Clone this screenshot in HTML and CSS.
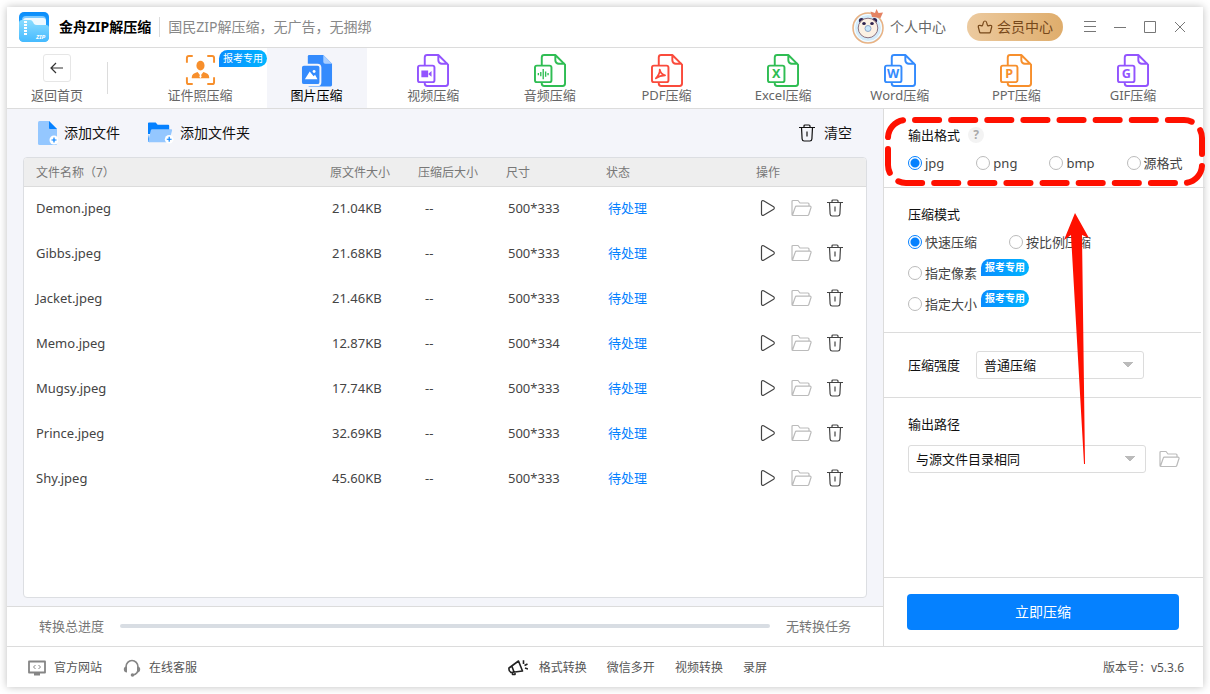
FILE: index.html
```html
<!DOCTYPE html>
<html lang="zh-CN">
  <head>
    <meta charset="UTF-8" />
    <meta name="viewport" content="width=device-width, initial-scale=1.0" />
    <title>金舟ZIP解压缩</title>
    <link rel="stylesheet" href="styles.css">
  </head>
  <body>
    <!-- shared icons -->
    <svg class="sprite" aria-hidden="true">
      <symbol id="doc" viewBox="0 0 33 34">
        <path d="M8 12V3.500a2.500 2.500 0 0 1 2.500-2.500H22l10 10v19.500a2.500 2.500 0 0 1-2.500 2.500h-19a2.500 2.500 0 0 1-2.500-2.500V29M22 1v5.500a3.500 3.500 0 0 0 3.500 3.500H32" fill="none" stroke="currentColor" stroke-width="2" stroke-linejoin="round" />
        <rect x="1" y="12" width="17" height="17" rx="2" fill="#fff" stroke="currentColor" stroke-width="2" />
      </symbol>
      <symbol id="play" viewBox="0 0 16 18">
        <path d="M1.500 3v12c0 1.300 1 1.800 2.100 1.200l10-6c.9-.6.900-1.800 0-2.400l-10-6C2.500 1.200 1.500 1.700 1.500 3z" fill="none" stroke="currentColor" stroke-width="1.200" />
      </symbol>
      <symbol id="folder" viewBox="0 0 21 18">
        <path d="M1 15.500V2.500Q1 1.500 2 1.500h5l2 2.500h8q1 0 1 1v2M1 15.500Q1 16.500 2 16.500h14.500q1 0 1.300-1l2.200-7q.3-1.300-1-1.300H5.500q-1 0-1.300 1L1.500 16" fill="none" stroke="currentColor" stroke-width="1.200" />
      </symbol>
      <symbol id="trash" viewBox="0 0 16 18">
        <path d="M0 3.500h16M5 3.500V2q0-1 1-1h4q1 0 1 1v1.500M2.500 3.500l.6 11.500q.2 2 2 2h5.800q1.800 0 2-2l.6-11.500M8 7.500v5" fill="none" stroke="currentColor" stroke-width="1.200" />
      </symbol>
    </svg>

    <div class="window">
      <header class="titlebar">
        <svg class="logo" viewBox="0 0 30 30">
          <defs>
            <linearGradient id="logoBack" x1="0" y1="0" x2="0" y2="1">
              <stop offset="0" stop-color="#0a8dfb" /><stop offset="1" stop-color="#3bb4ff" />
            </linearGradient>
            <linearGradient id="logoFront" x1="0" y1="0" x2="0" y2="1">
              <stop offset="0" stop-color="#8adcff" /><stop offset="1" stop-color="#45baff" />
            </linearGradient>
          </defs>
          <rect width="30" height="30" rx="5" fill="url(#logoBack)" />
          <path d="M3 8q0-4 4-4h16q4 0 4 4v10H3z" fill="#7cc9ff" />
          <path d="M4 9q0-3 3-3h17q3 0 3 3v9H4z" fill="#eef9ff" />
          <path d="M0 11q0-3 3-3h8q2 0 3 2l1 2q1 1 3 1h9q3 0 3 3v9q0 5-5 5H5q-5 0-5-5z" fill="url(#logoFront)" />
          <path d="M6.500 9v14" stroke="#fff" stroke-width="3" stroke-dasharray="2 1" />
          <text x="17" y="27" class="logo-text">ZIP</text>
        </svg>
        <h1>金舟ZIP解压缩</h1>
        <p class="slogan">国民ZIP解压缩，无广告，无捆绑</p>

        <a href="#" class="user">
          <svg class="avatar" viewBox="0 0 34 36">
            <circle cx="16" cy="19" r="15" fill="#d3ecfb" stroke="#e9b283" stroke-width="1.500" />
            <circle cx="16" cy="19" r="13.500" fill="none" stroke="#fff" stroke-width="1" />
            <circle cx="9.500" cy="11.500" r="2.600" fill="#2e2450" />
            <circle cx="22.500" cy="11.500" r="2.600" fill="#2e2450" />
            <circle cx="16" cy="19" r="9.800" fill="#fbf1e4" stroke="#8b7280" stroke-width="1" />
            <ellipse cx="12" cy="14.500" rx="1.800" ry="1.500" fill="#2e2450" />
            <ellipse cx="20" cy="14.500" rx="1.800" ry="1.500" fill="#2e2450" />
            <circle cx="16" cy="19.500" r="3" fill="#c9e8fc" stroke="#8da6c8" stroke-width="1" />
            <path d="M18.500 2.500l4.500 1.500L24.500 0l2 4 4.500-.5-2.500 5.500-8.500-1z" fill="#e48363" />
          </svg>
          个人中心
        </a>
        <a href="#" class="vip">
          <svg viewBox="0 0 16 14"><path d="M3.500 12.800h9q.7 0 .9-.8l1.300-5q.3-1.800-1.400-1.700-1.600.2-2.300.7Q10 5 9.800 3 9.500 1 8 1T6.200 3Q6 5 5 6q-.7-.5-2.300-.7Q1 5.200 1.300 7l1.300 5q.2.800.9.800z" fill="none" stroke="currentColor" stroke-width="1.200" stroke-linejoin="round" /></svg>
          会员中心
        </a>
        <div class="window-buttons">
          <button type="button" aria-label="菜单"><svg viewBox="0 0 14 14"><path d="M1 1.500h12M1 6.500h12M1 11.500h12" /></svg></button>
          <button type="button" aria-label="最小化"><svg viewBox="0 0 14 14"><path d="M1 7.500h12" /></svg></button>
          <button type="button" aria-label="最大化"><svg viewBox="0 0 14 14"><path d="M1.500 1.500h11v11h-11z" /></svg></button>
          <button type="button" aria-label="关闭"><svg viewBox="0 0 14 14"><path d="M2 2l10 10M12 2L2 12" /></svg></button>
        </div>
      </header>

      <nav class="tabs">
        <a href="#" class="back">
          <span class="back-icon"><svg viewBox="0 0 14 12"><path d="M13 6H1M6 1L1 6l5 5" fill="none" stroke="currentColor" stroke-width="1.200" /></svg></span>
          返回首页
        </a>
        <div class="tab-list">
          <a href="#" class="tab">
            <svg class="orange" viewBox="0 0 33 34">
              <path d="M3 9V4q0-2 2-2h4M24 2h5q2 0 2 2v5M31 24v5q0 2-2 2h-5M9 31H5q-2 0-2-2v-5" fill="none" stroke="currentColor" stroke-width="2" />
              <ellipse cx="17" cy="12" rx="4.200" ry="5" fill="currentColor" />
              <path d="M8 25v-1q0-4 6-5.500l3 4 3-4q6 1.500 6 5.500v1z" fill="currentColor" />
              <path d="M17 19.500l1.200 4-1.200 1.500-1.200-1.500z" fill="#fff" />
            </svg>
            证件照压缩
            <span class="badge">报考专用</span>
          </a>
          <a href="#" class="tab active">
            <svg viewBox="0 0 33 34">
              <path d="M7 2.500Q7 1 8.500 1H23l9 9v22q0 1.500-1.500 1.500h-22Q7 33.500 7 32z" fill="#348bfd" />
              <path d="M23 1l9 9h-7q-2 0-2-2z" fill="#a9cfff" />
              <rect x="0" y="11" width="20" height="21" rx="3" fill="#348bfd" stroke="#f4f5fa" stroke-width="2" />
              <path d="M4 26l5-8 4 5 1.500-1.500L17 26z" fill="#fff" />
              <circle cx="13.500" cy="18" r="1.500" fill="#fff" />
            </svg>
            图片压缩
          </a>
          <a href="#" class="tab">
            <svg class="purple" viewBox="0 0 33 34"><use href="#doc" /><path d="M4.500 17h7v7h-7zM12 20l3-2.500v6L12 21z" fill="currentColor" /></svg>
            视频压缩
          </a>
          <a href="#" class="tab">
            <svg class="green" viewBox="0 0 33 34"><use href="#doc" /><path d="M4.500 19.500v2.500M7 18.500v4.500M9.500 15.500v10.500M12 18v5.500M14.500 19.500v2.500" stroke="currentColor" stroke-width="1.400" /></svg>
            音频压缩
          </a>
          <a href="#" class="tab">
            <svg class="red" viewBox="0 0 33 34"><use href="#doc" /><path d="M9 16q.5 4-4 9 4-3 9.500-3Q10 21 9 16z" fill="none" stroke="currentColor" stroke-width="1.800" stroke-linejoin="round" /></svg>
            PDF压缩
          </a>
          <a href="#" class="tab">
            <svg class="green" viewBox="0 0 33 34"><use href="#doc" /><text x="9.500" y="25" class="glyph">X</text></svg>
            Excel压缩
          </a>
          <a href="#" class="tab">
            <svg class="blue" viewBox="0 0 33 34"><use href="#doc" /><text x="9.500" y="25" class="glyph">W</text></svg>
            Word压缩
          </a>
          <a href="#" class="tab">
            <svg class="orange" viewBox="0 0 33 34"><use href="#doc" /><text x="9.500" y="25" class="glyph">P</text></svg>
            PPT压缩
          </a>
          <a href="#" class="tab">
            <svg class="purple" viewBox="0 0 33 34"><use href="#doc" /><text x="9.500" y="25" class="glyph">G</text></svg>
            GIF压缩
          </a>
        </div>
      </nav>

      <div class="content">
        <main class="files">
          <div class="toolbar">
            <button type="button">
              <svg class="add-file" viewBox="0 0 20 24">
                <path d="M0 1.500Q0 0 1.500 0H11l8 8v14.500q0 1.500-1.500 1.500h-16Q0 24 0 22.500z" fill="#94c7ff" />
                <path d="M11 0l8 8h-7q-1 0-1-1z" fill="#0581ff" />
                <circle cx="16" cy="19" r="4.500" fill="#fff" />
                <path d="M13.500 19h5M16 16.500v5" stroke="#0581ff" stroke-width="1.200" />
              </svg>
              添加文件
            </button>
            <button type="button">
              <svg class="add-folder" viewBox="0 0 27 22">
                <path d="M0 1q0-1 1-1h7l2 2.500h11q1 0 1 1V12H0z" fill="#0581ff" />
                <path d="M0 12v7q0 1.500 1.500 1.500z" fill="#0581ff" />
                <path d="M3 8q.3-1 1.300-1H24q1.300 0 1 1.300l-3 11q-.3 1.200-1.500 1.200h-19Q0 20.500.3 19z" fill="#94c7ff" />
                <circle cx="22" cy="17.500" r="4.500" fill="#fff" />
                <path d="M19.500 17.500h5M22 15v5" stroke="#0581ff" stroke-width="1.200" />
              </svg>
              添加文件夹
            </button>
            <button type="button" class="clear"><svg class="trash"><use href="#trash" /></svg>清空</button>
          </div>

          <div class="table-box">
            <table>
              <colgroup>
                <col /><col class="col-size" /><col class="col-size" /><col class="col-dim" /><col class="col-status" /><col class="col-actions" />
              </colgroup>
              <thead>
                <tr><th>文件名称（7）</th><th>原文件大小</th><th>压缩后大小</th><th>尺寸</th><th>状态</th><th>操作</th></tr>
              </thead>
              <tbody>
                <tr>
                  <td>Demon.jpeg</td><td>21.04KB</td><td class="empty">--</td><td>500*333</td><td class="pending">待处理</td>
                  <td><div class="actions">
                    <button type="button" aria-label="开始"><svg class="play"><use href="#play" /></svg></button>
                    <button type="button" aria-label="打开文件夹" disabled><svg class="folder"><use href="#folder" /></svg></button>
                    <button type="button" aria-label="删除"><svg class="trash"><use href="#trash" /></svg></button>
                  </div></td>
                </tr>
                <tr>
                  <td>Gibbs.jpeg</td><td>21.68KB</td><td class="empty">--</td><td>500*333</td><td class="pending">待处理</td>
                  <td><div class="actions">
                    <button type="button" aria-label="开始"><svg class="play"><use href="#play" /></svg></button>
                    <button type="button" aria-label="打开文件夹" disabled><svg class="folder"><use href="#folder" /></svg></button>
                    <button type="button" aria-label="删除"><svg class="trash"><use href="#trash" /></svg></button>
                  </div></td>
                </tr>
                <tr>
                  <td>Jacket.jpeg</td><td>21.46KB</td><td class="empty">--</td><td>500*333</td><td class="pending">待处理</td>
                  <td><div class="actions">
                    <button type="button" aria-label="开始"><svg class="play"><use href="#play" /></svg></button>
                    <button type="button" aria-label="打开文件夹" disabled><svg class="folder"><use href="#folder" /></svg></button>
                    <button type="button" aria-label="删除"><svg class="trash"><use href="#trash" /></svg></button>
                  </div></td>
                </tr>
                <tr>
                  <td>Memo.jpeg</td><td>12.87KB</td><td class="empty">--</td><td>500*334</td><td class="pending">待处理</td>
                  <td><div class="actions">
                    <button type="button" aria-label="开始"><svg class="play"><use href="#play" /></svg></button>
                    <button type="button" aria-label="打开文件夹" disabled><svg class="folder"><use href="#folder" /></svg></button>
                    <button type="button" aria-label="删除"><svg class="trash"><use href="#trash" /></svg></button>
                  </div></td>
                </tr>
                <tr>
                  <td>Mugsy.jpeg</td><td>17.74KB</td><td class="empty">--</td><td>500*333</td><td class="pending">待处理</td>
                  <td><div class="actions">
                    <button type="button" aria-label="开始"><svg class="play"><use href="#play" /></svg></button>
                    <button type="button" aria-label="打开文件夹" disabled><svg class="folder"><use href="#folder" /></svg></button>
                    <button type="button" aria-label="删除"><svg class="trash"><use href="#trash" /></svg></button>
                  </div></td>
                </tr>
                <tr>
                  <td>Prince.jpeg</td><td>32.69KB</td><td class="empty">--</td><td>500*333</td><td class="pending">待处理</td>
                  <td><div class="actions">
                    <button type="button" aria-label="开始"><svg class="play"><use href="#play" /></svg></button>
                    <button type="button" aria-label="打开文件夹" disabled><svg class="folder"><use href="#folder" /></svg></button>
                    <button type="button" aria-label="删除"><svg class="trash"><use href="#trash" /></svg></button>
                  </div></td>
                </tr>
                <tr>
                  <td>Shy.jpeg</td><td>45.60KB</td><td class="empty">--</td><td>500*333</td><td class="pending">待处理</td>
                  <td><div class="actions">
                    <button type="button" aria-label="开始"><svg class="play"><use href="#play" /></svg></button>
                    <button type="button" aria-label="打开文件夹" disabled><svg class="folder"><use href="#folder" /></svg></button>
                    <button type="button" aria-label="删除"><svg class="trash"><use href="#trash" /></svg></button>
                  </div></td>
                </tr>
              </tbody>
            </table>
          </div>

          <div class="progress-row">
            <label for="total">转换总进度</label>
            <progress id="total" value="0" max="100"></progress>
            <span>无转换任务</span>
          </div>
        </main>

        <aside class="settings">
          <fieldset>
            <legend>输出格式 <button type="button" class="help" aria-label="帮助">?</button></legend>
            <div class="options">
              <label for="jpg"><input type="radio" id="jpg" name="format" checked />jpg</label>
              <label for="png"><input type="radio" id="png" name="format" />png</label>
              <label for="bmp"><input type="radio" id="bmp" name="format" />bmp</label>
              <label for="source"><input type="radio" id="source" name="format" />源格式</label>
            </div>
          </fieldset>

          <fieldset class="mode">
            <legend>压缩模式</legend>
            <div class="options">
              <label for="fast"><input type="radio" id="fast" name="mode" checked />快速压缩</label>
              <label for="ratio"><input type="radio" id="ratio" name="mode" />按比例压缩</label>
            </div>
            <div class="options">
              <label for="pixels"><input type="radio" id="pixels" name="mode" />指定像素<span class="badge">报考专用</span></label>
            </div>
            <div class="options">
              <label for="size"><input type="radio" id="size" name="mode" />指定大小<span class="badge">报考专用</span></label>
            </div>
          </fieldset>

          <div class="strength">
            <label for="level">压缩强度</label>
            <select id="level"><option>普通压缩</option></select>
          </div>

          <div class="output">
            <label for="path">输出路径</label>
            <div class="path-row">
              <select id="path"><option>与源文件目录相同</option></select>
              <button type="button" aria-label="浏览"><svg class="folder"><use href="#folder" /></svg></button>
            </div>
          </div>

          <div class="submit">
            <button type="button" class="start">立即压缩</button>
          </div>

          <!-- highlight box and arrow drawn over the settings -->
          <svg class="callout" viewBox="0 0 324 360" aria-hidden="true">
            <path class="callout-box" pathLength="720" d="M22 11H300a18 18 0 0 1 18 18V56a18 18 0 0 1-18 18H22a18 18 0 0 1-18-18V29a18 18 0 0 1 18-18z" />
            <path d="M191 104l14 25-7-3 3 229h-1L187 126l-7 5z" fill="#ff1000" />
          </svg>
        </aside>
      </div>

      <footer>
        <div class="support">
          <a href="#">
            <svg viewBox="0 0 18 16"><path d="M1 1.500h16v11H1z" fill="none" stroke="#858585" stroke-width="1.800" stroke-linejoin="round" /><path d="M6 13h6v2.500H6z" fill="#858585" /><path d="M7.500 5L5.500 7l2 2M10.500 5l2 2-2 2" fill="none" stroke="#858585" stroke-width="1" /></svg>
            官方网站
          </a>
          <a href="#">
            <svg viewBox="0 0 18 18"><path d="M3 10V8a6 6.500 0 0 1 12 0v2M15 10q0 5-5 6" fill="none" stroke="#858585" stroke-width="1.600" /><path d="M4 7.500v6Q1 13.500.8 10.500T4 7.500zM14 7.500v6q3 0 3.200-3T14 7.500z" fill="#858585" /><circle cx="9.500" cy="16" r="1.800" fill="#858585" /></svg>
            在线客服
          </a>
        </div>
        <div class="links">
          <svg viewBox="0 0 20 16"><path d="M1 8.500L10.500 1.500 14.500 11.500 3 13Q.5 11.500 1 8.500zM4 7l2 5.500M4.500 13v2h2.500v-2.500M15.500 4.500V.8M16.500 6l3-1.500M17 8.500l3 1" fill="none" stroke="#222" stroke-width="1.600" stroke-linejoin="round" /></svg>
          <a href="#">格式转换</a>
          <a href="#">微信多开</a>
          <a href="#">视频转换</a>
          <a href="#">录屏</a>
          <span class="version">版本号：v5.3.6</span>
        </div>
      </footer>
    </div>
  </body>
</html>
```
FILE: styles.css
```css
* {
  box-sizing: border-box;
}

body {
  font-family: "Noto Sans", "Noto Sans CJK SC", sans-serif;
  font-size: 13px;
  line-height: 20px;
  color: #444;
  background-color: #fff;
  margin: 0;
  padding: 7px;
}

a {
  color: inherit;
  text-decoration: none;
}

button,
select {
  font: inherit;
  color: inherit;
  padding: 0;
  border: none;
  background: none;
}

button {
  display: flex;
  align-items: center;
  cursor: pointer;
}

svg {
  display: block;
  flex: none;
}

.sprite {
  position: absolute;
  width: 0;
  height: 0;
}

.window {
  display: flex;
  flex-direction: column;
  min-height: calc(100vh - 14px);
  background-color: #fff;
  box-shadow: 0 0 8px rgba(0, 0, 0, 0.25);
}

/* title bar */
.titlebar {
  display: flex;
  align-items: center;
  height: 41px;
  padding: 0 16px 0 12px;
  border-bottom: 1px solid #dcdcdc;
  font-size: 14px;
}

.logo {
  width: 30px;
  height: 30px;
}

.logo-text {
  font-size: 6px;
  font-weight: bold;
  font-style: italic;
  fill: #fff;
}

h1 {
  margin: 0 8px 0 10px;
  font-size: 14px;
  font-weight: bold;
  color: #000;
}

.slogan {
  margin: 0;
  padding-left: 8px;
  border-left: 1px solid #dcdcdc;
  color: #888;
}

.user {
  display: flex;
  align-items: center;
  gap: 4px;
  margin-left: auto;
  color: #666;
}

.avatar {
  width: 34px;
  height: 36px;
}

.vip {
  display: flex;
  align-items: center;
  gap: 4px;
  height: 28px;
  margin: 0 20px 0 21px;
  padding: 0 10px;
  border-radius: 14px;
  background: linear-gradient(90deg, #ecca9f, #dfad6c);
  color: #77481a;
}

.vip svg {
  width: 16px;
  height: 14px;
}

.window-buttons {
  display: flex;
  gap: 16px;
}

.window-buttons svg {
  width: 14px;
  height: 14px;
  fill: none;
  stroke: #777;
  stroke-width: 1;
}

/* tabs */
.tabs {
  display: flex;
  height: 61px;
  padding-right: 20px;
  border-bottom: 1px solid #dcdcdc;
  color: #666;
}

.back,
.tab {
  display: flex;
  flex-direction: column;
  align-items: center;
  width: 100px;
  padding-top: 6px;
  position: relative;
}

.back-icon {
  display: flex;
  align-items: center;
  justify-content: center;
  width: 28px;
  height: 28px;
  margin-bottom: 3px;
  border: 1px solid #e6e6e6;
  border-radius: 3px;
  color: #333;
}

.back-icon svg {
  width: 14px;
  height: 12px;
}

.tab-list {
  display: flex;
  flex: 1;
  justify-content: space-between;
  padding-left: 43px;
  background: linear-gradient(#dcdcdc, #dcdcdc) 0 14px / 1px 32px no-repeat;
}

.tab svg {
  width: 32px;
  height: 33px;
  margin-bottom: -2px;
}

.tab.active {
  background-color: #f4f5fa;
  color: #000;
}

.glyph {
  font-size: 13px;
  font-weight: bold;
  text-anchor: middle;
  fill: currentColor;
}

.orange {
  color: #f78f2c;
}

.purple {
  color: #9254fe;
}

.green {
  color: #2fbd53;
}

.red {
  color: #fa4b3c;
}

.blue {
  color: #348bfd;
}

.badge {
  padding: 0 4px;
  border-radius: 9px 9px 9px 0;
  background: linear-gradient(90deg, #0a8dff, #00b4ff);
  color: #fff;
  font-size: 10px;
  line-height: 17px;
  white-space: nowrap;
}

.tab .badge {
  position: absolute;
  top: 2px;
  right: -17px;
}

/* file list */
.content {
  display: flex;
  flex: 1;
}

.files {
  display: flex;
  flex-direction: column;
  flex: 1;
  background-color: #f4f5fa;
}

.toolbar {
  display: flex;
  align-items: center;
  gap: 28px;
  height: 48px;
  padding: 0 31px;
  font-size: 14px;
  color: #111;
}

.toolbar button {
  gap: 6px;
}

.toolbar .clear {
  gap: 9px;
  margin-left: auto;
}

.add-file {
  width: 20px;
  height: 24px;
}

.add-folder {
  width: 26px;
  height: 22px;
}

.play,
.trash {
  width: 16px;
  height: 18px;
}

.folder {
  width: 21px;
  height: 18px;
}

.table-box {
  flex: 1;
  margin: 0 16px 8px;
  border: 1px solid #dcdee2;
  border-radius: 4px;
  background-color: #fff;
  overflow: hidden;
}

table {
  width: 100%;
  border-collapse: collapse;
  table-layout: fixed;
}

.col-size {
  width: 88px;
}

.col-dim {
  width: 100px;
}

.col-status {
  width: 150px;
}

.col-actions {
  width: 122px;
}

th {
  height: 28px;
  padding: 2px 12px 0;
  border-bottom: 1px solid #dcdcdc;
  background-color: #eee;
  color: #777;
  font-size: 12px;
  font-weight: normal;
  text-align: left;
  white-space: nowrap;
}

td {
  height: 45px;
  padding: 0 14px 2px;
}

td:first-child {
  padding-left: 12px;
}

td:last-child {
  padding: 0 0 2px 16px;
}

td.empty {
  padding-left: 19px;
}

.pending {
  color: #0581ff;
}

.actions {
  display: flex;
  align-items: center;
  gap: 15px;
}

button:disabled,
.path-row button {
  color: #bbb;
}

.progress-row {
  display: flex;
  align-items: center;
  gap: 16px;
  height: 41px;
  padding: 0 32px 2px;
  border-top: 1px solid #dcdcdc;
  border-bottom: 1px solid #dcdcdc;
  background-color: #fff;
  color: #777;
}

progress {
  flex: 1;
  height: 4px;
  border: none;
  border-radius: 2px;
  background-color: #d8dde3;
  overflow: hidden;
  appearance: none;
}

progress::-webkit-progress-bar {
  background-color: #d8dde3;
}

/* settings */
.settings {
  display: flex;
  flex-direction: column;
  width: 320px;
  border-left: 1px solid #dcdcdc;
  border-bottom: 1px solid #dcdcdc;
  position: relative;
}

fieldset,
.strength {
  margin: 0 2px 0 0;
  padding: 16px 22px 14px 24px;
  border: none;
  border-bottom: 1px solid #dcdcdc;
}

legend {
  display: flex;
  float: left;
  width: 100%;
  align-items: center;
  gap: 8px;
  height: 20px;
  margin-bottom: 8px;
  padding: 0;
  color: #111;
}

.help {
  justify-content: center;
  width: 16px;
  height: 16px;
  border-radius: 8px;
  background-color: #f3f3f3;
  color: #aaa;
  font-size: 12px;
  font-weight: bold;
}

.options {
  display: flex;
  gap: 32px;
  clear: both;
  height: 20px;
}

.options label {
  display: flex;
  align-items: center;
  gap: 3px;
  white-space: nowrap;
}

.options .badge {
  margin: 0 0 12px 1px;
  font-weight: bold;
}

.mode {
  padding-bottom: 18px;
}

.options + .options {
  margin-top: 11px;
}

input[type="radio"] {
  width: 14px;
  height: 14px;
  margin: 0;
  border: 1px solid #bbb;
  border-radius: 50%;
  appearance: none;
}

input[type="radio"]:checked {
  border-color: #0581ff;
  background: radial-gradient(#0581ff 4px, #fff 5px);
}

select {
  height: 28px;
  padding: 0 7px;
  border: 1px solid #dcdcdc;
  border-radius: 3px;
  background: conic-gradient(from -40deg at 50% 100%, #bbb 80deg, transparent 0) right 10px center / 10px 6px no-repeat;
  color: #111;
  appearance: none;
}

.strength {
  display: flex;
  align-items: center;
  gap: 16px;
  height: 65px;
  padding: 0 22px 0 24px;
  color: #111;
}

.strength select {
  width: 168px;
}

.output {
  padding: 16px 23px 16px 24px;
  color: #111;
}

.path-row {
  display: flex;
  gap: 13px;
  margin-top: 11px;
}

.path-row select {
  flex: 1;
}

.submit {
  margin-top: auto;
  padding: 16px 24px 16px 23px;
  border-top: 1px solid #dcdcdc;
}

.start {
  justify-content: center;
  width: 100%;
  height: 36px;
  border-radius: 4px;
  background-color: #0581ff;
  color: #fff;
  font-size: 14px;
}

.callout {
  position: absolute;
  top: 0;
  left: 0;
  width: 324px;
  height: 360px;
  pointer-events: none;
}

.callout-box {
  fill: none;
  stroke: #ff1000;
  stroke-width: 6;
  stroke-linecap: round;
  stroke-dasharray: 24 12;
  stroke-dashoffset: -9;
}

/* footer */
footer {
  display: grid;
  grid-template-columns: 22fr 31fr;
  align-items: center;
  height: 40px;
  padding: 1px 19px 0 21px;
  font-size: 12px;
  color: #555;
}

.support,
.links,
.support a {
  display: flex;
  align-items: center;
}

.support {
  gap: 21px;
}

.support a {
  gap: 8px;
}

.support svg {
  width: 18px;
  height: 18px;
}

.links {
  gap: 20px;
}

.links svg {
  width: 20px;
  height: 17px;
  margin-right: -9px;
}

.version {
  margin-left: auto;
}
```
